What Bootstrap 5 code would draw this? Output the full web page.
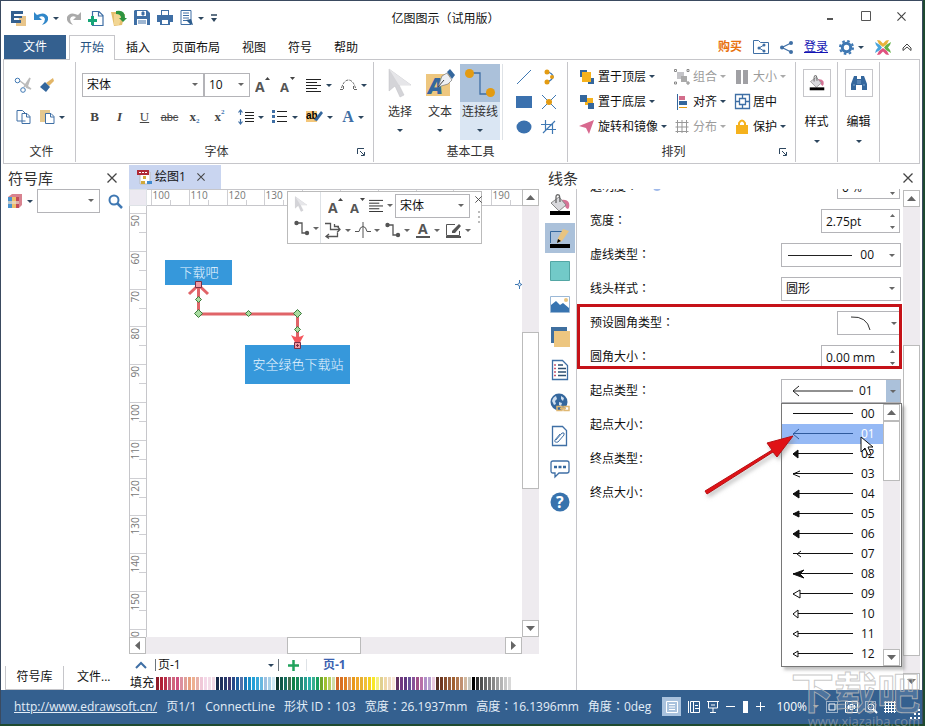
<!DOCTYPE html>
<html lang="zh-CN">
<head>
<meta charset="utf-8">
<meta name="viewport" content="width=device-width, initial-scale=1">
<title>亿图图示（试用版）</title>
<link href="https://cdn.jsdelivr.net/npm/bootstrap@5.3.0/dist/css/bootstrap.min.css" rel="stylesheet">
<style>
:root{--blue:#34608f;--line:#c6c6ca;--ink:#3f6fa5;--tri:url("data:image/svg+xml,%3Csvg xmlns='http://www.w3.org/2000/svg' width='6' height='4'%3E%3Cpath d='M0 0h6L3 3z' fill='%23666'/%3E%3C/svg%3E")}
body{height:100vh;min-height:600px;background:#1f4a30;font:12px/16px "Open Sans","Noto Sans CJK SC",sans-serif;color:#111;overflow:hidden}
.app{height:calc(100vh - 2px);margin-right:2px;border:1px solid #3a4a60;border-bottom:0;background:#fff;position:relative}
button,input,select{font:inherit;color:inherit}
.tb{background:none;border:0;padding:0;display:inline-flex;align-items:center;justify-content:center}
svg{display:block;flex:none;overflow:visible}
.car::after{content:"";border:3px solid transparent;border-top-color:#2d465e;border-bottom:0;flex:none}
.off{color:#9b9b9b}.off.car::after{border-top-color:#aaa}
.right .car::after,.float .car::after{border-top-color:#666}
.fld{border:1px solid #b4b4b8;border-radius:0;background:#fff;padding:0 0 0 4px;height:24px;line-height:16px}
select.fld{appearance:none;background:#fff var(--tri) no-repeat right 5px center}
.titlebar{height:34px;display:grid;grid-template-columns:1fr auto 1fr}
.titlebar h1{font-size:12px;font-weight:400;line-height:16px;margin:2px 32px 0 0}
.tabs{height:24px}
.tabs .rt{padding:0 11px;height:25px;line-height:24px;text-decoration:none;color:#111;border:1px solid transparent;border-width:1px 0 0}
.tabs .file{padding:0 19px;background:var(--blue);color:#fff;height:24px;margin-right:3px;border:0}
.tabs .on{border:1px solid var(--line);border-bottom:0;padding:0 10px;background:#fff;color:#24507f;position:relative;z-index:1}
.ribbon{height:105px;margin:0 2px;border:1px solid var(--line)}
.rg{border-right:1px solid var(--line);margin:2px 0 1px;flex:none}
.rg footer{height:20px;line-height:20px;margin-top:auto;color:#333}
.rows{padding-top:7px}
.r32{height:32px}.c25{width:25px;height:25px;font-size:13px;color:#444}.c34{width:34px;height:25px;gap:4px;padding-left:4px}
.ss{position:relative;top:4px;font-size:7px;color:#3f78b3}.ss.up{top:-5px}
.big{width:40px;height:76px;color:#333;justify-content:flex-start}.big .pic{height:38px;width:100%}
.big .lab{height:20px;line-height:20px}.big .dn{padding-top:7px}
.big.on{background:#dae6f3}.big.on .pic{background:#abc1da}
.arr{display:grid;grid-template-columns:95px 61px auto;grid-auto-rows:25px;padding:2px 0 0 11px}
.arr .tb{gap:3px;justify-content:flex-start}
.box{width:28px;height:28px;border:1px solid var(--line)}
.rg .cap{padding-top:17px}.rg .cdn{padding-top:10px}
.pt{font-size:15px;line-height:20px;height:25px;color:#333}
.left{width:128px;flex:none}
.lt{height:24px;line-height:22px;width:59px;text-align:center;border:1px solid var(--line);border-top:0;color:#111;text-decoration:none}
.right{width:382px;flex:none}
.dtab{background:#c9d5f0;height:24px;width:92px;margin-top:1px}
.work{display:grid;grid-template:17px minmax(0,1fr) 17px / 18px minmax(0,1fr) 17px;padding-right:1px}
.ruler{background:#fff;overflow:hidden;border-top:1px solid var(--line);border-bottom:1px solid var(--line)}
.ruler.v{border-top:0;border-bottom:0;border-left:1px solid var(--line);border-right:1px solid var(--line)}
.ruler svg line{stroke:#cfcfd3}.ruler svg text{font-size:10px;fill:#777}
.bar{background:#eeebef;min-width:0;min-height:0}
.bar .tb,.bar i{background:#fff;border:1px solid #bbb}
.bar .tb{width:17px;height:17px;flex:none}
.canv{position:relative;overflow:hidden}
.canv .node{fill:#3698db}
.canv text{font-size:13px;fill:#eaf6ff;font-weight:300;text-anchor:middle}
.float{position:absolute;left:286px;top:190px;width:195px;height:53px;background:#fff;border:1px solid #bbb;z-index:3}
.c30{width:30px;height:24px;gap:3px;justify-content:flex-start}
.pal{height:13px;gap:1px}.pal i{width:3px}
.side{width:37px;border-right:1px solid var(--line);padding:1px 1px 0 5px}
.side .tb{width:30px;height:30px;margin-bottom:3px}.side .on{background:#abc1da}
.form{min-width:0;margin-top:-19px}
.fr{height:34px;padding:0 2px 0 13px}
.form-range::-webkit-slider-thumb{width:8px;height:8px;margin-top:0;background:#9fb9ea}
.form-range::-webkit-slider-runnable-track{background:none}
.spin{width:80px;position:relative}.spin input{width:79px}
.spin .ud{position:absolute;right:5px;top:0;height:24px;width:7px}
.w120{width:120px}
.sel{border:1px solid #b4b4b8;background:#fff;height:24px;padding:0 5px 0 10px;justify-content:flex-end;gap:8px}
.drop{position:absolute;right:20px;top:239px;width:121px;height:264px;background:#fff;border:1px solid #777;box-shadow:3px 3px 3px #8888;z-index:5}
.drop li{height:20px;padding-left:10px;gap:7px;line-height:18px}
.drop .hot{background:#95b9f5;color:#fff}
.hot svg{color:#2f5a9c}
.redbox{position:absolute;left:37px;right:20px;top:140px;height:65px;border:3px solid #c51218;pointer-events:none;z-index:2}
.over{position:absolute;z-index:9;pointer-events:none}
.status{height:34px;background:var(--blue);color:#e3edf7;padding:0 2px 1px 13px}
.status a{color:#e3edf7}
.zoomer{appearance:none;width:5px;height:12px;background:#fff;margin:0 1px}
.zoomer::-webkit-slider-thumb{appearance:none;width:5px;height:12px;background:#fff}
.wm{right:2px;bottom:-3px;text-align:right;color:#a0a6b0a0;font-size:13px;line-height:12px}
.wm b{display:block;font-size:43px;line-height:44px;color:#ffffff20;-webkit-text-stroke:1px #bbbc}
</style>
</head>
<body>
<svg width="0" height="0" class="position-absolute" aria-hidden="true"><defs>
<symbol id="i-copy" viewBox="0 0 16 16"><path d="M10 12H1.500V1.500H7L10 4.500M6.500 4.500h5l3 3v7h-8zM11 4.500V8h3.500" fill="#fff" stroke="#3f6fa5"/></symbol>
<symbol id="i-align" viewBox="0 0 16 14"><path d="M0 1.500h15M0 4.500h11M0 7.500h15M0 10.500h11M0 13.500h15" stroke="#222"/></symbol>
<symbol id="i-aup" viewBox="0 0 16 18"><path d="M10 4l2.500-3L15 4z" fill="#444"/><text x="0" y="16" font-size="14" font-weight="700" fill="#555">A</text></symbol>
<symbol id="i-adn" viewBox="0 0 16 18"><path d="M10 1h5l-2.500 3z" fill="#444"/><text x="0" y="16" font-size="13" font-weight="700" fill="#555">A</text></symbol>
<symbol id="i-conn" viewBox="0 0 16 16"><path d="M3 3h5v10h5" fill="none" stroke="#555" stroke-width="1.300"/><circle cx="2.500" cy="3" r="2.200" fill="#555"/><circle cx="13" cy="13" r="2.200" fill="#555"/></symbol>
<symbol id="i-x" viewBox="0 0 10 10"><path d="M.5.5l9 9M9.500.5l-9 9" stroke="#444" stroke-width="1.300"/></symbol>
<symbol id="i-launch" viewBox="0 0 8 8"><path d="M.5 6V.5H7M3 3l4 4M7.500 4v3.500H4" fill="none" stroke="#2d465e"/></symbol>
<symbol id="i-bucket" viewBox="0 0 22 22"><path d="M12 6q6-1 8 3 1 4-1 6-3-1-3-4l-5-3z" fill="#d57396"/><path d="M2 9l8-6 7 8-7 6z" fill="#d8d8dc" stroke="#888"/><path d="M7 9V3q0-3 3-2 1 1 1 7" fill="none" stroke="#666" stroke-width="1.300"/><path d="M1 17h20v4H1z"/></symbol>
<symbol id="i-arrow" viewBox="0 0 24 30"><path d="M1 1v22l6-5 5 11 4-2-5-10h12z" fill="#d4d4d8" stroke="#c0c0c4" stroke-width=".5"/><path d="M1 1l10 16h12z" fill="#e6e6e9"/></symbol>
</defs></svg>

<div class="app d-flex flex-column">
<header class="titlebar align-items-center">
 <div class="d-flex align-items-center ps-2" style="gap:7px">
  <svg width="18" height="16" viewBox="0 0 18 16"><path d="M9 6h8v10H7v-3h4z" fill="#e8c58b"/><path d="M2 1h12v3H5v2h8v2H5v2h7v3H2z" fill="#34608f"/></svg>
  <button class="tb car gap-1" aria-label="撤销"><svg width="15" height="15" viewBox="0 0 15 15"><path d="M0 1v8h8L5 6q5-2 6 2 0 3-3 6 7-2 6-8Q11 0 3 4z" fill="#3087c9"/></svg></button>
  <button class="tb" aria-label="重做"><svg width="15" height="15" viewBox="0 0 15 15"><path d="M15 1v8H7l3-3Q5 4 4 8q0 3 3 6Q0 12 1 6 4 0 12 4z" fill="#aaa"/></svg></button>
  <button class="tb" aria-label="新建"><svg width="16" height="16" viewBox="0 0 16 16"><path d="M4.500 6V1.500H11l4 4v10H4.500V14M10.500 1.500V6H15" fill="none" stroke="#3f6fa5" stroke-width="1.200"/><path d="M0 9h3V6h3v3h3v3H6v3H3v-3H0z" fill="#17a578"/></svg></button>
  <button class="tb" aria-label="打开"><svg width="16" height="16" viewBox="0 0 16 16"><path d="M0 2h7l2 2h5l-3 11-8 1z" fill="#e5be6d"/><path d="M3 4h9L8 15H3z" fill="#f2d693"/><path d="M5 1q9-2 9 7h2l-4 4-4-4h2Q10 4 5 4z" fill="#2d9440"/></svg></button>
  <button class="tb" aria-label="保存"><svg width="16" height="16" viewBox="0 0 16 16"><path d="M1 0h12l3 3v12H0V1z" fill="#3f6fa5"/><path d="M3 1h9v5H3zM3 9h10v6H3z" fill="#fff"/><path d="M8 2h2v3H8zM4 11h8M4 13h8" fill="#3f6fa5" stroke="#3f6fa5"/></svg></button>
  <button class="tb" aria-label="打印"><svg width="16" height="16" viewBox="0 0 16 16"><path d="M4 0h8v5h4v7h-3v3H3v-3H0V5h4z" fill="#3f6fa5"/><path d="M5 1h6v4H5zM5 10h6v4H5z" fill="#fff"/></svg></button>
  <button class="tb car gap-1" aria-label="预览"><svg width="14" height="16" viewBox="0 0 14 16"><path d="M1 .5h10v14H1z" fill="#fff" stroke="#3f6fa5"/><path d="M3 3h6M3 5.500h6M3 8h6M3 10.500h4" stroke="#3f6fa5"/><path d="M6 10l5-1 1 3 1 3-3-1z" fill="#2d5d8d"/></svg></button>
  <button class="tb" aria-label="自定义"><svg width="6" height="9" viewBox="0 0 6 9"><path d="M0 1h6" stroke="#2d465e" stroke-width="1.500"/><path d="M0 4h6L3 8z" fill="#2d465e"/></svg></button>
 </div>
 <h1>亿图图示<span lang="zh-Hant">（</span>试用版<span lang="zh-Hant">）</span></h1>
 <div class="d-flex justify-content-end align-items-center pe-3 pb-1" style="gap:26px">
  <button class="tb" aria-label="最小化"><svg width="10" height="10"><path d="M2 8h6" stroke="#555" stroke-width="2"/></svg></button>
  <button class="tb" aria-label="最大化"><svg width="10" height="10"><path d="M.5.500h9v9h-9z" fill="none" stroke="#555"/></svg></button>
  <button class="tb" aria-label="关闭"><svg width="9" height="9"><use href="#i-x"/></svg></button>
 </div>
</header>

<nav class="tabs d-flex" style="padding-left:3px">
 <a href="#" class="rt file">文件</a><a href="#" class="rt on">开始</a><a href="#" class="rt">插入</a><a href="#" class="rt">页面布局</a><a href="#" class="rt">视图</a><a href="#" class="rt">符号</a><a href="#" class="rt">帮助</a>
 <div class="ms-auto d-flex align-items-center" style="gap:11px;padding-right:10px">
  <a href="#" class="fw-bold text-decoration-none" style="color:#e8700c">购买</a>
  <button class="tb" aria-label="共享文件夹"><svg width="16" height="14" viewBox="0 0 16 14"><path d="M.5.500h5l2 2h8v11H.5z" fill="#fff" stroke="#3f6fa5"/><path d="M11 5L6 8l5 3" fill="none" stroke="#3f6fa5"/><circle cx="11" cy="5" r="1.500" fill="#3f6fa5"/><circle cx="6" cy="8" r="1.500" fill="#3f6fa5"/><circle cx="11" cy="11" r="1.500" fill="#3f6fa5"/></svg></button>
  <button class="tb" aria-label="分享"><svg width="13" height="13" viewBox="0 0 13 13"><path d="M11 2L2 6.500l9 4.500" fill="none" stroke="#3f6fa5" stroke-width="1.200"/><circle cx="11" cy="2" r="2" fill="#3f6fa5"/><circle cx="2" cy="6.500" r="2" fill="#3f6fa5"/><circle cx="11" cy="11" r="2" fill="#3f6fa5"/></svg></button>
  <a href="#" style="color:#1414b4">登录</a>
  <button class="tb car gap-1" aria-label="设置"><svg width="15" height="15" viewBox="0 0 15 15"><circle cx="7.500" cy="7.500" r="4.200" fill="none" stroke="#3f78b3" stroke-width="3"/><circle cx="7.500" cy="7.500" r="6.500" fill="none" stroke="#3f78b3" stroke-width="2" stroke-dasharray="2.550 2.550"/></svg></button>
  <svg width="16" height="15" viewBox="0 0 16 15"><path d="M2 0l3 .5 3 3 3-3L14 0l-2 4-4 3-4-3z" fill="#e9b23a"/><path d="M2 15l3-.5 3-3 3 3 3 .5-2-4-4-3-4 3z" fill="#e0527f"/><path d="M0 2l5 3 2 2.500L5 10l-5 3 1-3 2-2.500L1 5z" fill="#4aa5dc"/><path d="M16 2l-5 3-2 2.500 2 2.500 5 3-1-3-2-2.500 2-2.500z" fill="#62b146"/></svg>
  <button class="tb" aria-label="折叠功能区"><svg width="10" height="8" viewBox="0 0 10 8"><path d="M1 7.500V5l4-4 4 4v2.500L5 4z" fill="#fff" stroke="#444"/></svg></button>
 </div>
</nav>

<section class="ribbon d-flex">
 <div class="rg d-flex flex-column" style="width:72px">
  <div class="ps-2 rows">
   <div class="r32 d-flex align-items-center gap-2" style="padding-left:3px"><button class="tb" aria-label="剪切"><svg width="17" height="16" viewBox="0 0 17 16"><path d="M5 4l11 8-5-2M9 10l6-9-3 9" fill="#ccc" stroke="#bbb" stroke-width="1.500"/><circle cx="2.500" cy="3.500" r="2.300" fill="none" stroke="#3f78b3"/><circle cx="8" cy="13" r="2.300" fill="none" stroke="#3f78b3"/></svg></button><button class="tb" aria-label="格式刷"><svg width="14" height="14" viewBox="0 0 14 14"><path d="M13 0l1 3-5 5-3-3z" fill="#e2b567"/><path d="M5 4l5 5-4 5-6-5z" fill="#34679d"/></svg></button></div>
   <div class="r32 d-flex align-items-center gap-2" style="padding-left:3px"><button class="tb" aria-label="复制"><svg width="17" height="16"><use href="#i-copy"/></svg></button><button class="tb car gap-1" aria-label="粘贴"><svg width="15" height="16" viewBox="0 0 15 16"><path d="M0 1h10v12H0z" fill="#e5c88f"/><path d="M5.500 4.500H11l3 3v7H5.500zM10.500 4.500V8H14" fill="#fff" stroke="#3f6fa5"/></svg></button></div>
  </div>
  <footer class="text-center ps-1">文件</footer>
 </div>
 <div class="rg d-flex flex-column" style="width:298px">
  <div class="rows" style="padding-left:6px">
   <div class="r32 d-flex align-items-center"><select class="fld" aria-label="字体" style="width:122px"><option>宋体</option></select><select class="fld" aria-label="字号" style="width:46px"><option>10</option></select>
    <button class="tb c25" aria-label="增大字号"><svg width="16" height="18"><use href="#i-aup"/></svg></button><button class="tb c25" aria-label="减小字号"><svg width="16" height="18"><use href="#i-adn"/></svg></button>
    <button class="tb c34 car" aria-label="对齐方式"><svg width="16" height="14"><use href="#i-align"/></svg></button><button class="tb c34 car" aria-label="弧形"><svg width="17" height="12" viewBox="0 0 17 12"><path d="M0 10.500h3.500V7M1.500 9Q4 1 8.500 1T15.500 9M13.500 7v3.500H17" fill="none" stroke="#666" stroke-dasharray="3 1"/></svg></button></div>
   <div class="r32 d-flex align-items-center" style="font-family:'Liberation Serif',serif"><button class="tb c25 fw-bold">B</button><button class="tb c25 fst-italic fw-bold">I</button><button class="tb c25 text-decoration-underline">U</button><button class="tb c25 text-decoration-line-through" style="font-family:'Liberation Sans',sans-serif;font-size:11px">abc</button><button class="tb c25 fw-bold">x<span class="ss">2</span></button><button class="tb c25 fw-bold">x<span class="ss up">2</span></button>
    <button class="tb c34 car" aria-label="行距"><svg width="16" height="16" viewBox="0 0 16 16"><path d="M7 3.500h9M7 6.500h9M7 9.500h9M7 12.500h9" stroke="#222"/><path d="M2.500 1v5M2.500 10v5M.5 3.500l2-2.500 2 2.500M.5 12.500l2 2.500 2-2.500" fill="none" stroke="#3f6fa5" stroke-width="1.200"/></svg></button>
    <button class="tb c34 car" aria-label="项目符号"><svg width="16" height="14" viewBox="0 0 16 14"><path d="M0 0h3v3H0zM0 5h3v3H0zM0 10h3v3H0z" fill="#3f6fa5"/><path d="M5 1.500h10M5 6.500h10M5 11.500h10" stroke="#222"/></svg></button>
    <button class="tb c34 car" aria-label="突出显示"><svg width="17" height="14" viewBox="0 0 17 14"><path d="M0 1h11v11H0z" fill="#f4c77a"/><text x="0" y="9" font-size="10" font-weight="700" font-family="Liberation Sans">ab</text><path d="M15 1l2 2-6 8-3-1z" fill="#34679d"/></svg></button>
    <button class="tb c34 car fw-bold" style="color:#3f6fa5;font-size:16px"><span>A</span></button></div>
  </div>
  <footer class="d-flex"><span class="flex-grow-1 text-center">字体</span><button class="tb me-2" aria-label="字体设置"><svg width="8" height="8"><use href="#i-launch"/></svg></button></footer>
 </div>
 <div class="rg d-flex flex-column" style="width:194px">
  <div class="d-flex" style="padding:2px 0 0 6px">
   <button class="tb big flex-column"><span class="pic d-flex align-items-center justify-content-center"><svg width="24" height="30"><use href="#i-arrow"/></svg></span><span class="lab">选择</span><span class="car d-flex dn"></span></button>
   <button class="tb big flex-column"><span class="pic d-flex align-items-center justify-content-center"><svg width="30" height="28" viewBox="0 0 30 28"><path d="M1 5h24v22H1z" fill="#eec77f"/><text x="3" y="25" font-size="22" font-weight="800" font-style="italic" fill="#34679d">A</text><path d="M13 18l4-11 5-3 5 7-4 4z" fill="#eef0f4" stroke="#777" stroke-width=".7"/><path d="M13 18l6-7" stroke="#444"/><path d="M22 3l3-3 5 6-3 4z" fill="#34679d"/></svg></span><span class="lab">文本</span><span class="car d-flex dn"></span></button>
   <button class="tb big on flex-column"><span class="pic d-flex align-items-center justify-content-center"><svg width="30" height="28" viewBox="0 0 30 28"><path d="M4 4h11v21h11" fill="none" stroke="#3f6fa5" stroke-width="1.300"/><circle cx="4.500" cy="4.500" r="4.500" fill="#e39b12"/><circle cx="25.500" cy="23.500" r="4.500" fill="#e39b12"/></svg></span><span class="lab">连接线</span><span class="car d-flex dn"></span></button>
   <div class="border-start ps-2 d-grid" style="margin-left:2px;grid-template-columns:25px 25px;grid-auto-rows:25px">
    <button class="tb" aria-label="直线"><svg width="16" height="16"><path d="M1 15L15 1" stroke="#3f78b3"/></svg></button>
    <button class="tb" aria-label="弧线"><svg width="16" height="16"><path d="M5 2q14 5 0 12" fill="none" stroke="#3f78b3" stroke-width="1.300"/><circle cx="6" cy="3" r="2.500" fill="#e39b12"/><circle cx="6" cy="13" r="2.500" fill="#e39b12"/><circle cx="11" cy="8" r="2" fill="#e39b12"/></svg></button>
    <button class="tb" aria-label="矩形"><svg width="16" height="16"><path d="M0 2h16v12H0z" fill="#3b71ae"/></svg></button>
    <button class="tb" aria-label="节点"><svg width="16" height="16"><path d="M1 1l14 14M15 1L1 15" stroke="#3f78b3"/><circle cx="8" cy="8" r="3" fill="#e39b12"/></svg></button>
    <button class="tb" aria-label="椭圆"><svg width="16" height="16"><ellipse cx="8" cy="8" rx="7.500" ry="6.500" fill="#3b71ae"/></svg></button>
    <button class="tb" aria-label="裁剪"><svg width="16" height="16"><path d="M0 5.500h11.500V15M4.500 1v9.500H15M2 14L14 2" fill="none" stroke="#3f78b3" stroke-width="1.200"/></svg></button>
   </div>
  </div>
  <footer class="text-center">基本工具</footer>
 </div>
 <div class="rg d-flex flex-column" style="width:228px">
  <div class="arr">
   <button class="tb car"><svg width="16" height="16"><path d="M1 1h7v7H1zM9 9h6v6H9z" fill="#34679d"/><path d="M3 3h9v10H3z" fill="#f5b21d"/></svg>置于顶层</button>
   <button class="tb car off"><svg width="16" height="16"><path d="M3 3h7v7H3z" fill="#c4c4c8"/><path d="M7 7h6v6H7z" fill="#aaa"/><path d="M.5.500h2v2h-2zM13 .5h2v2h-2zM.5 13h2v2h-2zM13 13h2v2h-2z" fill="none" stroke="#888"/></svg>组合</button>
   <button class="tb car off"><svg width="15" height="16"><path d="M1 1h5v14H1zM8 1h5v14H8z" fill="#a0a0a4"/></svg>大小</button>
   <button class="tb car"><svg width="16" height="16"><path d="M6 4h8v7H6z" fill="#f5b21d"/><path d="M1 1h7v7H1zM9 9h6v6H9z" fill="#34679d"/></svg>置于底层</button>
   <button class="tb car"><svg width="16" height="16"><path d="M3.500 0v16" stroke="#34679d"/><path d="M5 2h6v4H5z" fill="#d36d8b"/><path d="M5 7h8v4H5z" fill="#34679d"/><path d="M5 13.500h8" stroke="#e39b12"/></svg>对齐</button>
   <button class="tb"><svg width="15" height="15"><path d="M.5.500h14v14H.5zM4.500 4.500h6v6h-6zM7.500 0v4M7.500 11v4M0 7.500h4M11 7.500h4" fill="none" stroke="#3f6fa5" stroke-width="1.300"/></svg>居中</button>
   <button class="tb car"><svg width="16" height="16"><path d="M15 1L0 7l7 2 3 6z" fill="#d8698f"/></svg>旋转和镜像</button>
   <button class="tb car off"><svg width="16" height="16"><path d="M1.500 3.500h13M1.500 8h13M1.500 12.500h13M3.500 1v13M8 1v13M12.500 1v13" stroke="#999"/></svg>分布</button>
   <button class="tb car"><svg width="15" height="16"><path d="M1 6h12v9H1z" fill="#f5b21d"/><path d="M4 7V4q3-5 6 0v3" fill="none" stroke="#f5b21d" stroke-width="2"/></svg>保护</button>
  </div>
  <footer class="d-flex"><span class="flex-grow-1 text-center">排列</span><button class="tb me-2" aria-label="排列设置"><svg width="8" height="8"><use href="#i-launch"/></svg></button></footer>
 </div>
 <button class="tb rg flex-column justify-content-start" style="width:42px;padding-top:7px"><span class="box d-flex align-items-center justify-content-center"><svg width="16" height="16"><use href="#i-bucket"/></svg></span><span class="cap">样式</span><span class="car d-flex cdn"></span></button>
 <button class="tb rg flex-column justify-content-start" style="width:42px;padding-top:7px"><span class="box d-flex align-items-center justify-content-center"><svg width="16" height="16" viewBox="0 0 16 16"><path d="M3 1h3v3h4V1h3l3 8v6h-5v-5H5v5H0V9z" fill="#34679d"/><path d="M2 10h2M12 10h2M7 5v4M9 5v4" stroke="#9dbbe0" stroke-width=".7"/></svg></span><span class="cap">编辑</span><span class="car d-flex cdn"></span></button>
</section>

<main class="d-flex flex-grow-1" style="min-height:0">
 <aside class="left d-flex flex-column">
  <div class="pt d-flex align-items-center justify-content-between" style="padding:3px 12px 0 7px">符号库<button class="tb" aria-label="关闭符号库"><svg width="10" height="10"><use href="#i-x"/></svg></button></div>
  <div class="d-flex align-items-center" style="padding:0 0 0 7px;gap:4px">
   <button class="tb car gap-1" aria-label="库"><svg width="15" height="16" viewBox="0 0 15 16"><path d="M0 4l4-3h10v11l-3 3H0z" fill="#d8828f"/><path d="M0 4h4v11H0z" fill="#4a93cf"/><path d="M4 4h4v11H4z" fill="#eec06c"/><path d="M8 4h3v11H8z" fill="#c24a58"/><path d="M0 8h11v3H0z" fill="#e8dccb" opacity=".7"/></svg></button>
   <select class="fld" aria-label="搜索符号" style="width:63px"></select>
   <button class="tb ps-1" aria-label="搜索"><svg width="15" height="15" viewBox="0 0 15 15"><circle cx="6" cy="6" r="4.500" fill="none" stroke="#3f78b3" stroke-width="2"/><path d="M9.500 9.500L14 14" stroke="#3f78b3" stroke-width="2.500"/></svg></button>
  </div>
  <div class="mt-auto d-flex ps-1"><a href="#" class="lt">符号库</a><a href="#" class="text-reset text-decoration-none" style="margin-left:13px;line-height:22px">文件...</a></div>
 </aside>

 <section class="d-flex flex-column flex-grow-1" style="min-width:0">
  <div style="height:25px"><div class="dtab d-flex align-items-center ps-2" style="gap:3px"><svg width="15" height="15" viewBox="0 0 15 15"><path d="M3 2h10v12H3z" fill="#fff" stroke="#bbb"/><path d="M0 0h12v5H0z" fill="#b02a35"/><path d="M2 2.500h8" stroke="#fff" stroke-dasharray="2 1"/><path d="M6 6h3v3H6zM4 11h4v3H4z" fill="#d2a93a"/><path d="M10 11h5v3h-5z" fill="#3f8ad0"/></svg>绘图1<button class="tb ms-1 ps-1" aria-label="关闭绘图"><svg width="8" height="8"><use href="#i-x"/></svg></button></div></div>
  <div class="work flex-grow-1" style="min-height:0">
   <div style="background:#ece9f1" class="border"></div>
   <div class="ruler"><svg id="rh" width="100%" height="17"></svg></div>
   <div class="bar d-flex flex-column" style="grid-row:1/3;grid-column:3"><button class="tb" aria-label="向上"><svg width="9" height="5"><path d="M0 5h9L4.500 0z" fill="#666"/></svg></button><i style="height:157px;margin-top:126px"></i><button class="tb mt-auto" aria-label="向下"><svg width="9" height="5"><path d="M0 0h9L4.500 5z" fill="#666"/></svg></button></div>
   <div class="ruler v"><svg id="rv" width="16" height="100%"></svg></div>
   <div class="canv">
    <svg width="100%" height="100%">
     <rect class="node" x="18" y="54" width="67" height="25"/><rect class="node" x="98" y="139" width="105" height="39"/>
     <text x="52" y="71">下载吧</text><text x="151" y="163">安全绿色下载站</text>
     <path d="M51.500 80v28h99v24" fill="none" stroke="#e06468" stroke-width="3"/><path d="M42 88l9.500-9 9.500 9" fill="none" stroke="#e06468" stroke-width="3"/><path d="M144 129q6 4 13 0l-6.500 12z" fill="#f4555c"/>
     <g fill="#a9dca0" stroke="#3c7a3c"><path d="M51.500 103.500l4 4-4 4-4-4zM150.500 103.500l4 4-4 4-4-4zM51.500 90.500l3 3-3 3-3-3zM101.500 104.500l3 3-3 3-3-3zM150.500 120.500l3 3-3 3-3-3z"/></g>
     <path d="M48.500 75.500h6v6h-6zM147.500 136.500h6v6h-6z" fill="#f19aa4" stroke="#7c2f45"/><path d="M149 139.500h3M150.500 138v3" stroke="#7c2f45"/>
     <path d="M368 78.500h9M372.500 74v9" stroke="#3f78b3"/><circle cx="372.500" cy="78.500" r="1.500" fill="#fff" stroke="#3f78b3"/>
    </svg>
   </div>
   <div class="bar d-flex" style="grid-column:1/3"><button class="tb" aria-label="向左"><svg width="5" height="9"><path d="M5 0v9L0 4.500z" fill="#666"/></svg></button><i style="width:74px;margin-left:141px"></i><button class="tb ms-auto" aria-label="向右"><svg width="5" height="9"><path d="M0 0v9l5-4.500z" fill="#666"/></svg></button></div>
   <div class="bar"></div>
  </div>
  <div class="d-flex align-items-center" style="height:22px;padding-left:6px">
   <svg width="13" height="8"><path d="M1 7l5-5 5 5" fill="none" stroke="#3f6fa5" stroke-width="2"/></svg>
   <button class="tb car justify-content-between border-start border-end border-secondary pe-1" style="width:124px;height:12px;margin-left:7px;padding-left:2px">页-1</button>
   <button class="tb ms-2" aria-label="添加页"><svg width="13" height="13"><path d="M6.500 1v11M1 6.500h11" stroke="#21a35c" stroke-width="2.500"/></svg></button>
   <a href="#" class="border-start fw-bold text-decoration-none ps-3" style="color:#3b62b0;line-height:12px;margin-left:6px">页-1</a>
  </div>
  <div class="d-flex align-items-center" style="height:14px;gap:2px;padding-left:1px">填充<div class="pal d-flex" id="pal"></div></div>
 </section>

 <aside class="right d-flex flex-column position-relative">
  <div class="pt d-flex align-items-center justify-content-between" style="padding:3px 9px 0 8px">线条<button class="tb" aria-label="关闭线条"><svg width="10" height="10"><use href="#i-x"/></svg></button></div>
  <div class="d-flex flex-grow-1" style="min-height:0;padding-right:2px">
   <div class="side d-flex flex-column">
    <button class="tb" aria-label="填充"><svg width="22" height="22"><use href="#i-bucket"/></svg></button>
    <button class="tb on" aria-label="线条"><svg width="22" height="22" viewBox="0 0 22 22"><path d="M1.500 16V4.500H13" fill="none" stroke="#34679d"/><path d="M1 17h20v4H1z"/><path d="M14 2l6 2-7 10-5 2 1-5z" fill="#e8c481"/><path d="M8 16l1-4 3 2z"/></svg></button>
    <button class="tb" aria-label="颜色"><svg width="20" height="20"><path d="M.5.500h19v19H.5z" fill="#72cac8" stroke="#53a6a4"/></svg></button>
    <button class="tb" aria-label="图片"><svg width="20" height="17" viewBox="0 0 20 17"><path d="M.5.500h19v16H.5z" fill="#fff" stroke="#9bb8d6"/><circle cx="16" cy="4" r="2" fill="#e8c481"/><path d="M1 16V9l5-4 4 4 3-2 6 5v4z" fill="#3874b0"/></svg></button>
    <button class="tb" aria-label="阴影"><svg width="20" height="20"><path d="M1 0h16v16H1z" fill="#3f6f9f"/><path d="M4 4h16v16H4z" fill="#edc680"/></svg></button>
    <button class="tb" aria-label="列表"><svg width="18" height="20"><path d="M1.500.500h10l5 5v14h-15z" fill="#fff" stroke="#3f6fa5" stroke-width="1.300"/><path d="M3 5h2M3 8.500h2M3 12h2M3 15.500h2" stroke="#c85870" stroke-width="1.500"/><path d="M7 5h5M7 8.500h8M7 12h8M7 15.500h8" stroke="#2d4f72" stroke-width="1.500"/></svg></button>
    <button class="tb" aria-label="超链接"><svg width="20" height="20"><circle cx="9" cy="9" r="8.500" fill="#34679d"/><path d="M2 8q1-4 4-5l1 3-2 2 1 3-2 1zM11 3l3 2-1 3-2-2zM9 9l3 1-1 3-2-1z" fill="#cfdff0"/><path d="M7 13.500h5v4H7zM14 13.500h5v4h-5zM10 15.500h6" fill="none" stroke="#e0b873" stroke-width="1.500"/></svg></button>
    <button class="tb" aria-label="附件"><svg width="18" height="20"><path d="M1.500.500h10l4 4v15h-14z" fill="#fff" stroke="#3f6fa5" stroke-width="1.300"/><path d="M5 14l6-7q3-1 2 2l-6 7q-4 1-3-2l5-6" fill="none" stroke="#3f6fa5"/></svg></button>
    <button class="tb" aria-label="注释"><svg width="20" height="18"><path d="M3 1h14q2 0 2 2v8q0 2-2 2H9l-4 4v-4H3q-2 0-2-2V3q0-2 2-2z" fill="#fff" stroke="#3f6fa5" stroke-width="1.300"/><path d="M4 7h3M8.500 7h3M13 7h3" stroke="#34679d" stroke-width="2.500"/></svg></button>
    <button class="tb" aria-label="帮助"><svg width="20" height="20"><circle cx="10" cy="10" r="9.500" fill="#3873ad"/><text x="6" y="16" font-size="16" font-weight="700" fill="#fff">?</text></svg></button>
   </div>
   <div class="flex-grow-1 overflow-hidden"><div class="form">
    <div class="fr d-flex align-items-center justify-content-between"><label for="f0">透明度<span lang="zh-Hant">：</span></label><input type="range" id="f0" class="form-range" style="width:150px;height:14px;margin-right:20px" value="0"><span class="spin" style="width:64px"><input aria-label="透明度" class="fld" style="width:63px" value="0 %"><span class="ud d-flex flex-column justify-content-around"><button class="tb" aria-label="增加"><svg width="5" height="3"><path d="M0 3h5L2.500 0z" fill="#666"/></svg></button><button class="tb" aria-label="减少"><svg width="5" height="3"><path d="M0 0h5L2.500 3z" fill="#666"/></svg></button></span></span></div>
    <div class="fr d-flex align-items-center justify-content-between"><label for="f1">宽度<span lang="zh-Hant">：</span></label><span class="spin"><input id="f1" class="fld" value="2.75pt"><span class="ud d-flex flex-column justify-content-around"><button class="tb" aria-label="增加"><svg width="5" height="3"><path d="M0 3h5L2.500 0z" fill="#666"/></svg></button><button class="tb" aria-label="减少"><svg width="5" height="3"><path d="M0 0h5L2.500 3z" fill="#666"/></svg></button></span></span></div>
    <div class="fr d-flex align-items-center justify-content-between"><label for="f2">虚线类型<span lang="zh-Hant">：</span></label><button id="f2" class="tb sel w120"><svg width="64" height="3"><path d="M0 1.500h64" stroke="#222"/></svg><span class="car d-flex align-items-center" style="gap:15px">00</span></button></div>
    <div class="fr d-flex align-items-center justify-content-between"><label for="f3">线头样式<span lang="zh-Hant">：</span></label><select id="f3" class="fld w120"><option>圆形</option></select></div>
    <div class="fr d-flex align-items-center justify-content-between"><label for="f4">预设圆角类型<span lang="zh-Hant">：</span></label><button id="f4" class="tb sel car" style="width:64px;gap:20px;padding-right:3px"><svg width="20" height="15"><path d="M0 1q16-1 19 13" fill="none" stroke="#333"/></svg></button></div>
    <div class="fr d-flex align-items-center justify-content-between"><label for="f5">圆角大小<span lang="zh-Hant">：</span></label><span class="spin"><input id="f5" class="fld" value="0.00 mm"><span class="ud d-flex flex-column justify-content-around"><button class="tb" aria-label="增加"><svg width="5" height="3"><path d="M0 3h5L2.500 0z" fill="#666"/></svg></button><button class="tb" aria-label="减少"><svg width="5" height="3"><path d="M0 0h5L2.500 3z" fill="#666"/></svg></button></span></span></div>
    <div class="fr d-flex align-items-center justify-content-between"><label for="f6">起点类型<span lang="zh-Hant">：</span></label>
     <span class="w120"><button id="f6" class="tb sel w-100 pe-0" style="gap:5px"><svg width="62" height="12"><path d="M1 6h60M7 1L1 6l6 5" fill="none" stroke="#222"/></svg>01<span class="car d-flex align-items-center justify-content-center h-100 ms-2" style="width:15px;background:#abc1da"></span></button></span></div>
    <div class="fr d-flex align-items-center">起点大小<span lang="zh-Hant">：</span></div>
    <div class="fr d-flex align-items-center">终点类型<span lang="zh-Hant">：</span></div>
    <div class="fr d-flex align-items-center">终点大小<span lang="zh-Hant">：</span></div>
   </div></div>
   <div class="bar d-flex flex-column" style="width:17px;margin-top:1px"><button class="tb" aria-label="向上"><svg width="9" height="5"><path d="M0 5h9L4.500 0z" fill="#666"/></svg></button><i style="height:311px;margin-top:138px"></i><button class="tb mt-auto" aria-label="向下"><svg width="9" height="5"><path d="M0 0h9L4.500 5z" fill="#666"/></svg></button></div>
  </div>
  <div class="redbox"></div>
  <div class="drop d-flex">
   <ul class="list-unstyled m-0" id="opts" role="listbox" aria-label="起点类型" style="width:101px"></ul>
   <div class="bar d-flex flex-column" style="width:17px"><button class="tb" aria-label="向上"><svg width="9" height="5"><path d="M0 5h9L4.500 0z" fill="#666"/></svg></button><i style="height:60px"></i><button class="tb mt-auto" aria-label="向下"><svg width="9" height="5"><path d="M0 0h9L4.500 5z" fill="#666"/></svg></button></div>
  </div>
  <svg class="over" style="right:122px;top:266px;filter:drop-shadow(2px 3px 2px #8888)" width="96" height="68"><path d="M1 61l67-41-5-7 26-7-16 21-4-5L3 64z" fill="#e01216" stroke="#b81014"/></svg>
  <svg class="over" style="right:48px;top:272px" width="14" height="20"><path d="M1 1v15l4-4 3 7 3-1-3-7h5z" fill="#fff" stroke="#111"/></svg>
 </aside>
</main>

<footer class="status d-flex align-items-center">
 <div class="d-flex" style="gap:9px"><a href="#">http://www.edrawsoft.cn/</a><span>页1/1</span><span>ConnectLine</span><span>形状 ID<span lang="zh-Hant">：</span>103</span><span>宽度<span lang="zh-Hant">：</span>26.1937mm</span><span>高度<span lang="zh-Hant">：</span>16.1396mm</span><span>角度<span lang="zh-Hant">：</span>0deg</span></div>
 <div class="ms-auto d-flex align-items-center" style="gap:7px;margin-right:14px">
  <button class="tb" aria-label="普通视图" style="background:#a9c2dd;width:19px;height:19px"><svg width="12" height="12"><path d="M.5.500h11v11H.5zM3 3.500h6M3 6h6M3 8.500h6" fill="none" stroke="#fff"/></svg></button>
  <button class="tb" aria-label="分栏视图"><svg width="12" height="12"><path d="M.5 0v12M2.500.500h9v11h-9zM5.500 1v10M7 4.500h3M7 7.500h4" fill="none" stroke="#fff"/></svg></button>
  <button class="tb" aria-label="演示"><svg width="12" height="12"><path d="M0 .5h12M1.500 1v6h9V1M6 7v4M3 11.500h6M4 4h4" fill="none" stroke="#fff"/></svg></button>
  <button class="tb" aria-label="缩小"><svg width="9" height="9"><path d="M0 4.500h9" stroke="#fff"/></svg></button>
  <input type="range" class="zoomer" aria-label="缩放">
  <button class="tb" aria-label="放大"><svg width="9" height="9"><path d="M0 4.500h9M4.500 0v9" stroke="#fff"/></svg></button>
  <button class="tb car off ps-1" style="color:#fff;gap:6px">100%</button>
  <svg width="12" height="12"><path d="M.5.500h11v11H.5z" fill="none" stroke="#fff" stroke-dasharray="1 1"/><path d="M3 3h6v6H3z" fill="none" stroke="#fff"/></svg>
  <svg width="13" height="12"><path d="M.5.500h12v11H.5zM2 6h9M3.500 4v4M9.500 4v4M5 3.500h3v5H5z" fill="none" stroke="#fff"/></svg>
  <svg width="12" height="12"><path d="M.5.500h10v10H.5z" fill="none" stroke="#fff" stroke-dasharray="1 1"/><circle cx="6" cy="6" r="3" fill="#34608f" stroke="#fff"/><path d="M8 8l4 4" stroke="#fff" stroke-width="2"/></svg>
  <svg width="12" height="12"><path d="M0 1.500h12M0 4.500h12M0 7.500h12M0 10.500h12M1.500 0v12M4.500 0v12M7.500 0v12M10.500 0v12" stroke="#fff"/></svg>
 </div>
 <svg width="10" height="10" class="align-self-end mb-1"><path d="M8 0h2v2H8zM8 4h2v2H8zM8 8h2v2H8zM4 4h2v2H4zM4 8h2v2H4zM0 8h2v2H0z" fill="#fff"/></svg>
</footer>
<div class="over wm"><b>下载吧</b>www.xiazaiba.com</div>
<div class="float d-flex">
 <div class="border-end d-flex flex-column" style="width:33px;padding-left:6px"><button class="tb c30" style="width:26px" aria-label="选择"><svg width="14" height="16" viewBox="0 0 24 30"><use href="#i-arrow"/></svg></button><button class="tb c30 car" style="width:26px" aria-label="连接线"><svg width="16" height="16"><use href="#i-conn"/></svg></button></div>
 <div class="flex-grow-1" style="padding-left:4px">
  <div class="d-flex align-items-center" style="height:27px"><button class="tb" style="width:22px" aria-label="增大字号"><svg width="16" height="18"><use href="#i-aup"/></svg></button><button class="tb" style="width:22px" aria-label="减小字号"><svg width="16" height="18"><use href="#i-adn"/></svg></button><button class="tb car" style="width:24px;gap:3px" aria-label="对齐"><svg width="15" height="13"><use href="#i-align"/></svg></button><select class="fld" aria-label="字体" style="width:75px;margin-left:2px"><option>宋体</option></select></div>
  <div class="d-flex align-items-center" style="height:22px"><button class="tb c30 car" aria-label="跨线"><svg width="17" height="16" viewBox="0 0 17 16"><path d="M0 1.500h5.500v6H15M12 4l3 3.500-3 3M9.500 2v2.500H14M2 14.500h10.500V11M4 12l-3 2.500 3 2" fill="none" stroke="#555" stroke-width="1.300"/></svg></button><button class="tb c30 car" aria-label="交叉"><svg width="16" height="16"><path d="M0 9.500h4q1-5 4-5t4 5h4M8 0v16" fill="none" stroke="#555"/></svg></button><button class="tb c30 car" aria-label="连接点"><svg width="16" height="16"><use href="#i-conn"/></svg></button><button class="tb c30 car" aria-label="字体颜色"><svg width="16" height="16"><text x="3" y="12" font-size="14" font-weight="700" fill="#555">A</text><path d="M1 15h14" stroke="#555" stroke-width="2"/></svg></button><button class="tb c30 car" aria-label="线条颜色"><svg width="17" height="15"><path d="M10 1.500H1.500v11h13V8" fill="none" stroke="#555"/><path d="M1 14h15" stroke="#555" stroke-width="2"/><path d="M14 1l2 2-6 7H7V8z" fill="#555"/></svg></button></div>
 </div>
 <div class="d-flex flex-column align-items-center pt-1" style="width:10px"><button class="tb" aria-label="关闭工具栏"><svg width="7" height="7"><use href="#i-x"/></svg></button><svg width="2" height="14" class="mt-2"><path d="M1 0v2M1 5v2M1 10v2" stroke="#bbb" stroke-width="2"/></svg></div>
</div>
</div>
<script src="https://cdn.jsdelivr.net/npm/bootstrap@5.3.0/dist/js/bootstrap.bundle.min.js"></script>
<script>
const step = 37.8;
function drawRulers() {
  let h = '', v = '';
  for (let i = 0; i * step < rh.clientWidth - 20; i++) {
    const x = Math.round(4 + i * step) + .5, m = Math.round(23 + i * step) + .5;
    h += `<line x1="${x}" x2="${x}" y2="17"/><line x1="${m}" x2="${m}" y1="10" y2="17"/><text x="${x + 1}" y="9">${100 + i * 10}</text>`;
  }
  for (let i = 0; i * step < rv.clientHeight; i++) {
    const y = Math.round(7 + i * step) + .5, n = Math.round(26 + i * step) + .5;
    v += `<line y1="${y}" y2="${y}" x2="16"/><line y1="${n}" y2="${n}" x1="9" x2="16"/><text transform="translate(9 ${y + (i < 5 ? 13 : 19)}) rotate(-90)">${50 + i * 10}</text>`;
  }
  rh.innerHTML = h; rv.innerHTML = v;
}
drawRulers();
addEventListener('resize', drawRulers);
const colors = '8e1b2b b02035 b9304a c05a78 d0647c d05080 dc90a0 e0a098 e8a080 eeb090 e8b0a8 f0c8d8 f4d8e8 f4dce8 f0d8e4 182848 20305c 28386c 403870 284888 2060a0 5070a8 1878b8 1890c8 20a0d8 38a8d8 68b8e0 a0c0e0 a8d0e8 d0e8f4 103830 105848 187060 407050 108048 188858 208878 28a090 28b0a8 38b090 18a060 70a828 a0c030 b8d060 d0dca8 d06828 d87020 e08020 e0a060 e89818 f0a828 e8b030 f0c038 f4d020 f8e828 f4f080 e0d090 f0d8a8 f0dcc0 f8e8d8 603060 703880 603880 685098 885098 a05088 b870a8 b090c8 b8a0d0 e8c8e0 583028 703820 885030 986040 a06030 b07850 c09070 d0b8a0 c8c8c0 000 303030 505050 686868 787878 888 a0a0a0 b4b4b4 c8c8c8 d8d8d8'.split(' ');
pal.innerHTML = colors.map(c => `<i style="background:#${c}"></i>`).join('');
const heads = ['', 'M7 1L1 6l6 5', '#M1 6l5-4v8z', 'M8 3L1 6l7 3', '#M1 6l6-4v8z', '#M1 6l6-3v6z', '#M1 6l6-4v8z', 'M9 3L5 6l4 3', '#M1 6l11-4-4 4 4 4z', '!M1 6l7-4v8z', '!M1 6l5-4v8z', '!M1 6l5-3v6z', '!M1 6l5-3v6z'];
opts.innerHTML = heads.map((d, i) => `<li role="option" class="d-flex align-items-center${i == 1 ? ' hot' : ''}"><svg width="62" height="12"><path d="M1 5.500h60" stroke="currentColor"/><path d="${d.replace(/[#!]/, '')}" stroke="currentColor" fill="${d[0] == '#' ? 'currentColor' : d[0] == '!' ? '#fff' : 'none'}"/></svg>${String(i).padStart(2, '0')}</li>`).join('');
</script>
</body>
</html>
